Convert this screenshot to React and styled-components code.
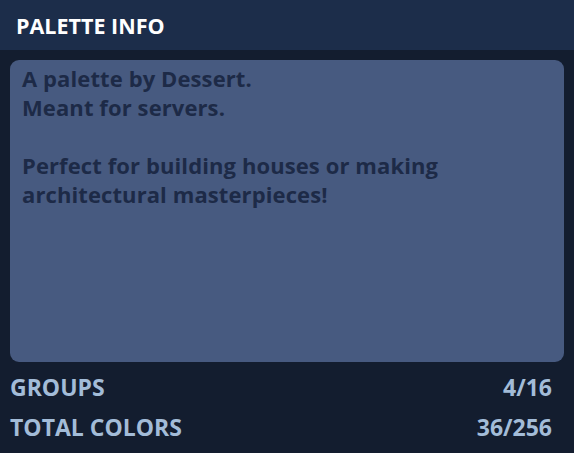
import styled, { createGlobalStyle } from 'styled-components';

const GlobalStyle = createGlobalStyle`
  html, body {
    margin: 0;
    padding: 0;
    background: #131d2f;
  }
  body {
    font-family: "Open Sans", Lato, sans-serif;
  }
`;

const Panel = styled.section`
  width: 574px;
  height: 453px;
  display: flex;
  flex-direction: column;
  background: #131d2f;
  overflow: hidden;
`;

const Header = styled.header`
  height: 50px;
  flex-shrink: 0;
  display: flex;
  align-items: center;
  padding: 0 16px;
  background: #1c2d4a;
`;

const Title = styled.h2`
  margin: 0;
  font-size: 21.5px;
  font-weight: 700;
  color: #ffffff;
  text-transform: uppercase;
`;

const Body = styled.div`
  flex: 1;
  display: flex;
  flex-direction: column;
  padding: 10px 10px 8px;
`;

const Description = styled.div`
  height: 302px;
  box-sizing: border-box;
  padding: 4px 12px;
  border-radius: 9px;
  background: #475a80;
  color: #1d2a47;
  font-size: 22px;
  font-weight: 700;
  letter-spacing: 0.1px;
  line-height: 29px;
  white-space: pre-line;
`;

const Stats = styled.dl`
  margin: 5px 0 0;
  padding: 0 12px 0 0;
  display: flex;
  flex-direction: column;
`;

const StatRow = styled.div`
  display: flex;
  justify-content: space-between;
  align-items: baseline;
  height: 40px;
  line-height: 40px;
  font-size: 23px;
  font-weight: 700;
  color: #a3bcd8;
`;

const StatLabel = styled.dt`
  margin: 0;
  text-transform: uppercase;
`;

const StatValue = styled.dd`
  margin: 0;
`;

const stats = [
  { label: 'Groups', value: '4/16' },
  { label: 'Total colors', value: '36/256' },
];

export default function App() {
  return (
    <>
      <GlobalStyle />
      <Panel>
        <Header>
          <Title>Palette info</Title>
        </Header>
        <Body>
          <Description>
            {'A palette by Dessert.\nMeant for servers.\n\nPerfect for building houses or making\narchitectural masterpieces!'}
          </Description>
          <Stats>
            {stats.map((s) => (
              <StatRow key={s.label}>
                <StatLabel>{s.label}</StatLabel>
                <StatValue>{s.value}</StatValue>
              </StatRow>
            ))}
          </Stats>
        </Body>
      </Panel>
    </>
  );
}
